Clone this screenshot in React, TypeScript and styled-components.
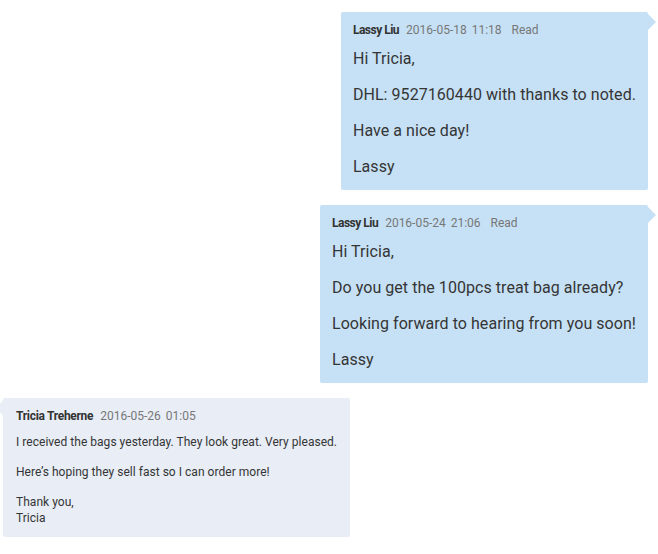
import styled, { createGlobalStyle } from 'styled-components';

const GlobalStyle = createGlobalStyle`
  html, body { margin: 0; padding: 0; background: #ffffff; }
  body { font-family: Roboto, "Liberation Sans", Arial, sans-serif; color: #333333; }
`;

type Side = 'out' | 'in';

interface Message {
  id: number;
  side: Side;
  name: string;
  time: string;
  read?: boolean;
  paragraphs: string[][];
}

const messages: Message[] = [
  {
    id: 1,
    side: 'out',
    name: 'Lassy Liu',
    time: '2016-05-18 11:18',
    read: true,
    paragraphs: [['Hi Tricia,'], ['DHL: 9527160440 with thanks to noted.'], ['Have a nice day!'], ['Lassy']],
  },
  {
    id: 2,
    side: 'out',
    name: 'Lassy Liu',
    time: '2016-05-24 21:06',
    read: true,
    paragraphs: [['Hi Tricia,'], ['Do you get the 100pcs treat bag already?'], ['Looking forward to hearing from you soon!'], ['Lassy']],
  },
  {
    id: 3,
    side: 'in',
    name: 'Tricia Treherne',
    time: '2016-05-26 01:05',
    paragraphs: [
      ['I received the bags yesterday. They look great. Very pleased.'],
      ['Here\u2019s hoping they sell fast so I can order more!'],
      ['Thank you,', 'Tricia'],
    ],
  },
];

// ── Layout ────────────────────────────────────────────────────────
const Thread = styled.div`
  display: flex;
  flex-direction: column;
  gap: 15px;
  padding: 12px 10px 0 3px;
  width: 658px;
  box-sizing: border-box;
`;

const Row = styled.div<{ $side: Side }>`
  display: flex;
  justify-content: ${p => (p.$side === 'out' ? 'flex-end' : 'flex-start')};
`;

const Bubble = styled.div<{ $side: Side }>`
  position: relative;
  max-width: 520px;
  border-radius: 2px;
  background: ${p => (p.$side === 'out' ? '#c6e1f5' : '#e8edf6')};
  padding: ${p => (p.$side === 'out' ? '10px 12px 13px 12px' : '10px 13px 11px 13px')};

  &::after {
    content: '';
    position: absolute;
    top: 2px;
    width: 0;
    height: 0;
    border-top: 8px solid transparent;
    border-bottom: 8px solid transparent;
    ${p =>
      p.$side === 'out'
        ? `right: -8px; border-left: 8px solid #c6e1f5;`
        : `left: -6px; border-right: 6px solid #e8edf6;`}
  }
`;

const Header = styled.div`
  display: flex;
  align-items: baseline;
  gap: 7px;
  height: 16px;
  line-height: 16px;
  white-space: nowrap;
`;

const Name = styled.span<{ $side: Side }>`
  font-size: 12px;
  font-weight: 700;
  letter-spacing: ${p => (p.$side === 'out' ? '-0.5px' : '-0.3px')};
  color: #333333;
`;

const Meta = styled.span`
  font-size: 12px;
  color: #777777;
  word-spacing: 2px;
`;

const Body = styled.div<{ $side: Side }>`
  margin-top: ${p => (p.$side === 'out' ? '11px' : '10px')};
  font-size: ${p => (p.$side === 'out' ? '16px' : '12px')};
  line-height: ${p => (p.$side === 'out' ? '20px' : '16px')};
  letter-spacing: ${p => (p.$side === 'out' ? '0.05px' : '0.03px')};
  color: #353535;
  white-space: nowrap;
`;

const Para = styled.p<{ $side: Side }>`
  margin: 0 0 ${p => (p.$side === 'out' ? '16px' : '14px')} 0;
  &:last-child { margin-bottom: 0; }
`;

export default function App() {
  return (
    <>
      <GlobalStyle />
      <Thread>
        {messages.map(m => (
          <Row key={m.id} $side={m.side}>
            <Bubble $side={m.side}>
              <Header>
                <Name $side={m.side}>{m.name}</Name>
                <Meta>
                  {m.time}
                  {m.read ? '\u00a0 Read' : ''}
                </Meta>
              </Header>
              <Body $side={m.side}>
                {m.paragraphs.map((lines, i) => (
                  <Para key={i} $side={m.side}>
                    {lines.map((l, j) => (
                      <span key={j}>
                        {l}
                        {j < lines.length - 1 && <br />}
                      </span>
                    ))}
                  </Para>
                ))}
              </Body>
            </Bubble>
          </Row>
        ))}
      </Thread>
    </>
  );
}
